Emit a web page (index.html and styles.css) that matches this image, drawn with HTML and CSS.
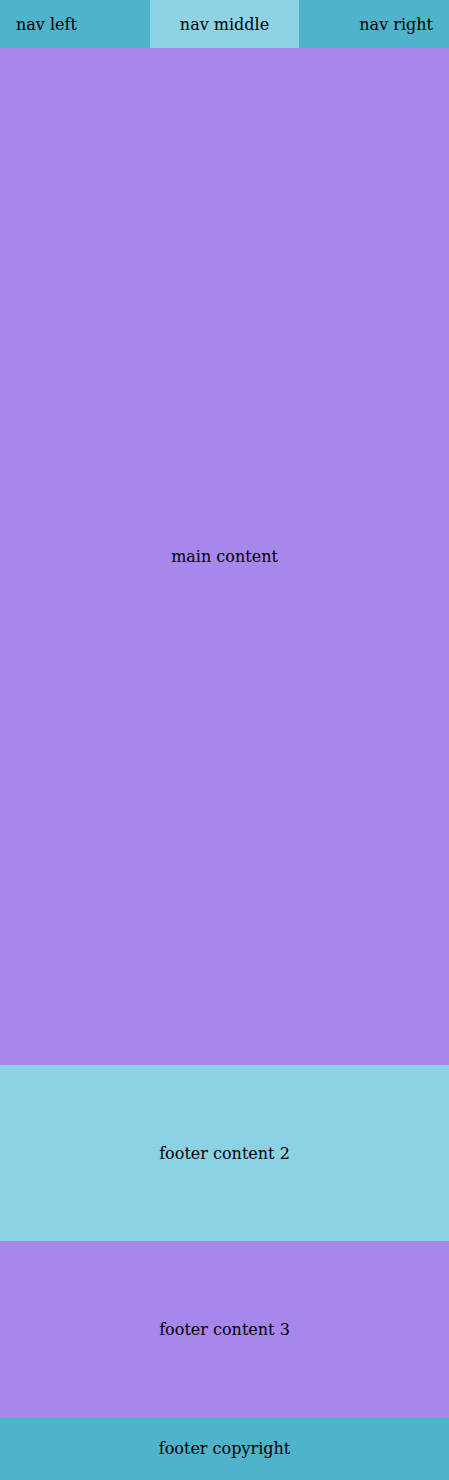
FILE: index.html
```html
<!DOCTYPE html>
<html>
<head>
<meta charset="utf-8">
<link rel="stylesheet" href="styles.css">
</head>
<body>
<div class="page">
  <nav class="nav">
    <div class="nav-left">nav left</div>
    <div class="nav-middle">nav middle</div>
    <div class="nav-right">nav right</div>
  </nav>
  <main class="main">main content</main>
  <div class="footer2">footer content 2</div>
  <div class="footer3">footer content 3</div>
  <footer class="copyright">footer copyright</footer>
</div>
</body>
</html>
```
FILE: styles.css
```css
html, body {
  margin: 0;
  padding: 0;
}
body {
  font-family: "DejaVu Serif", serif;
  font-size: 16px;
  color: #000;
}
.page {
  display: flex;
  flex-direction: column;
  height: 1480px;
}
.nav {
  display: grid;
  grid-template-columns: 150px 149px 150px;
  height: 48px;
  flex: none;
}
.nav > div {
  display: flex;
  align-items: center;
  padding: 0 16px;
}
.nav-left {
  background: #4fb3cc;
}
.nav-middle {
  background: #8dd3e3;
  justify-content: center;
}
.nav-right {
  background: #4fb3cc;
  justify-content: flex-end;
}
.main {
  flex: 1;
  display: flex;
  align-items: center;
  justify-content: center;
  background: #a887ed;
}
.footer2 {
  height: 176px;
  flex: none;
  display: flex;
  align-items: center;
  justify-content: center;
  background: #8bd2e3;
}
.footer3 {
  height: 176px;
  flex: none;
  display: flex;
  align-items: center;
  justify-content: center;
  background: #a887ed;
}
.copyright {
  height: 63px;
  flex: none;
  display: flex;
  align-items: center;
  justify-content: center;
  background: #4fb3cc;
}
```
